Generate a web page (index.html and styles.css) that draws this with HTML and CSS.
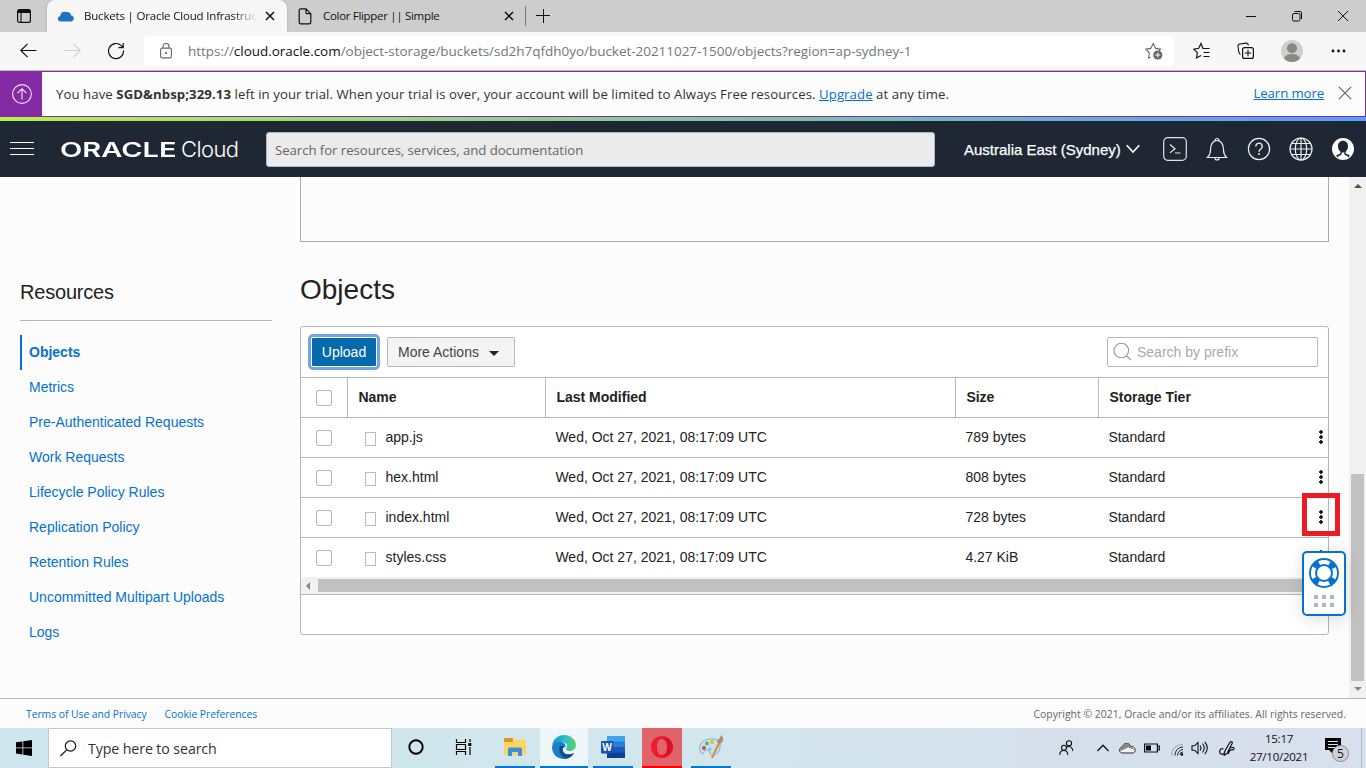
FILE: index.html
```html
<!DOCTYPE html>
<html lang="en">
<head>
<meta charset="utf-8">
<title>Buckets | Oracle Cloud Infrastructure</title>
<link rel="stylesheet" href="styles.css">
</head>
<body>
<div class="screen">
  <div class="tabs">
    <svg class="tab-menu" width="16" height="16" viewBox="0 0 16 16"><rect x="1.6" y="1.6" width="12.8" height="12.8" rx="2" fill="none" stroke="#111" stroke-width="1.2"/><path d="M1.5 3.4a2 2 0 0 1 2-2h9a2 2 0 0 1 2 2v1.6h-13z" fill="#111"/><path d="M5 5v9" stroke="#111" stroke-width="1.1"/></svg>
    <div class="tab active">
      <svg width="18" height="12" viewBox="0 0 18 12"><path d="M4 11.5C0 11.5 0 6.500 3.300 6C3.500 2.500 6.500 1 9 2.300C12 1.500 14 3.300 14 5.600C18 6 17.500 11.500 14 11.500z" fill="#2173bd"/></svg>
      <span class="tab-title fade">Buckets | Oracle Cloud Infrastruc</span>
      <svg class="tab-close" width="10" height="10" viewBox="0 0 10 10"><path d="M1 1l8 8M9 1l-8 8" stroke="#111" stroke-width="1.5"/></svg>
    </div>
    <div class="tab second">
      <svg width="14" height="17" viewBox="0 0 14 17"><path d="M8 .8H2.800A1.600 1.600 0 0 0 1.200 2.400v11.800a1.600 1.600 0 0 0 1.600 1.600h8.400a1.600 1.600 0 0 0 1.600-1.600V5.700zV4.700a1 1 0 0 0 1 1h3.800" fill="none" stroke="#111" stroke-width="1.200"/></svg>
      <span class="tab-title">Color Flipper || Simple</span>
      <svg class="tab-close" width="10" height="10" viewBox="0 0 10 10"><path d="M1 1l8 8M9 1l-8 8" stroke="#111" stroke-width="1.5"/></svg>
    </div>
    <i class="tab-rule"></i>
    <svg class="tab-add" width="14" height="14" viewBox="0 0 14 14"><path d="M7.500 0v14M0 6.500h14" stroke="#111"/></svg>
    <div class="window-buttons">
      <svg width="10" height="12" viewBox="0 0 10 12"><path d="M0 6.500h10" stroke="#111"/></svg>
      <svg width="10" height="12" viewBox="0 0 10 12"><rect x=".5" y="3.500" width="7.500" height="7.500" rx="1.500" fill="none" stroke="#111"/><path d="M2.500 1.500H8a1.500 1.500 0 0 1 1.500 1.500v6" fill="none" stroke="#111"/></svg>
      <svg width="10" height="12" viewBox="0 0 10 12"><path d="M0 1l10 10M10 1L0 11" stroke="#111"/></svg>
    </div>
  </div>

  <div class="browser-bar">
    <svg class="nav-back" width="17" height="16" viewBox="0 0 17 16"><path d="M16.500 7.500H1M7.500.8L.8 7.500l6.700 6.700" fill="none" stroke="#111" stroke-width="1.200"/></svg>
    <svg class="nav-forward" width="17" height="16" viewBox="0 0 17 16"><path d="M0 7.500h16M9.500.8l6.700 6.700-6.700 6.700" fill="none" stroke="#d0d0d0" stroke-width="1.200"/></svg>
    <svg class="nav-reload" width="18" height="18" viewBox="0 0 18 18"><path d="M16.500 8.500a7.500 7.500 0 1 1-2.300-4.900L16 5.400M16.200 1v4.700h-4.700" fill="none" stroke="#111" stroke-width="1.200"/></svg>
    <div class="address">
      <svg width="12" height="16" viewBox="0 0 12 16"><rect x=".6" y="5.100" width="10.800" height="9.800" rx="1.500" fill="none" stroke="#666" stroke-width="1.100"/><path d="M3 5V3.500a3 3 0 0 1 6 0V5" fill="none" stroke="#666" stroke-width="1.100"/><circle cx="6" cy="10" r="1" fill="#555"/></svg>
      <span class="url">https://<b>cloud.oracle.com</b>/object-storage/buckets/sd2h7qfdh0yo/bucket-20211027-1500/objects?region=ap-sydney-1</span>
      <svg class="star" width="18" height="18" viewBox="0 0 18 18"><path d="M5.500 15.200L3.600 16l.7-5.200L.9 7.200l4.800-.8L8.200 1.500l2.400 4.900 4.900.8-1.500 1.600" fill="none" stroke="#666" stroke-width="1.100"/><circle cx="12.800" cy="13" r="4.600" fill="#666"/><path d="M12.800 10.500v5M10.300 13h5" stroke="#fff"/></svg>
    </div>
    <svg class="favorites" width="18" height="18" viewBox="0 0 18 18"><path d="M16.500 6.500H10L8 1.500 5.700 6.300l-5 .8 3.700 3.600-.9 5.200L8 13.500M10.500 10.500h6M10.500 14.500h6" fill="none" stroke="#111" stroke-width="1.150"/></svg>
    <svg class="collections" width="18" height="18" viewBox="0 0 18 18"><rect x="5.600" y="5.600" width="10.800" height="10.800" rx="2" fill="none" stroke="#111" stroke-width="1.200"/><path d="M11 7.800v6.400M7.800 11h6.400M3.500 12.500C2 12 2 10.500 1.700 9L1 4.500C.8 3 1.500 2.200 3 2l6-.9c1.500-.2 2.200.6 2.500 2.200" fill="none" stroke="#111" stroke-width="1.100"/></svg>
    <svg class="avatar" width="22" height="22" viewBox="0 0 22 22"><defs><clipPath id="profile"><circle cx="11" cy="11" r="11"/></clipPath></defs><g clip-path="url(#profile)"><path fill="#d1cfcc" d="M0 0h22v22H0z"/><circle cx="11" cy="8.300" r="5" fill="#8b8783"/><ellipse cx="11" cy="19" rx="8" ry="5" fill="#8b8783"/></g></svg>
    <svg class="more" width="15" height="4" viewBox="0 0 15 4"><g fill="#111"><circle cx="2" cy="2" r="1.400"/><circle cx="7.500" cy="2" r="1.400"/><circle cx="13" cy="2" r="1.400"/></g></svg>
  </div>

  <div class="trial">
    <div class="trial-icon"><svg width="20" height="20" viewBox="0 0 20 20"><g fill="none" stroke="#f2e6f5" stroke-width="1.100"><circle cx="10" cy="10" r="9.400"/><path d="M10 15.500V5M5.500 9.200L10 4.800l4.500 4.400"/></g></svg></div>
    <span class="trial-text">You have <b>SGD&amp;nbsp;329.13</b> left in your trial. When your trial is over, your account will be limited to Always Free resources. <a>Upgrade</a> at any time.</span>
    <a class="learn">Learn more</a>
    <svg class="dismiss" width="14" height="14" viewBox="0 0 14 14"><path d="M.8.800l12.400 12.400M13.200.800L.8 13.200" stroke="#666" stroke-width="1.200"/></svg>
  </div>
  <div class="rainbow"></div>

  <header class="cloud-header">
    <svg class="menu" width="24" height="14" viewBox="0 0 24 14"><path d="M0 .5h24M0 6.500h24M0 12.500h24" stroke="#fff"/></svg>
    <div class="logo"><span class="oracle">ORACLE</span><span class="cloud">Cloud</span></div>
    <div class="global-search">Search for resources, services, and documentation</div>
    <div class="region">Australia East (Sydney)<svg width="14" height="10" viewBox="0 0 14 10"><path d="M.7 1.300L7 8l6.300-6.700" fill="none" stroke="#fff" stroke-width="1.600"/></svg></div>
    <div class="header-icons">
      <svg width="24" height="24" viewBox="0 0 24 24"><rect x=".7" y=".7" width="22.600" height="22.600" rx="4" fill="none" stroke="#dfe2e6" stroke-width="1.200"/><path d="M7 7.500l5 4.200-5 4.200M12 16h5.500" fill="none" stroke="#eee" stroke-width="1.200"/></svg>
      <svg width="24" height="24" viewBox="0 0 24 24"><path d="M2.500 20.500h19c-2-2-3-4-3-7.500 0-5-2-9.500-6.500-9.500S5.500 8 5.500 13c0 3.500-1 5.500-3 7.500zM10 3.500a2 2 0 0 1 4 0M9.800 20.700a2.200 2.200 0 0 0 4.400 0" fill="none" stroke="#eee" stroke-width="1.200"/></svg>
      <svg width="24" height="24" viewBox="0 0 24 24"><circle cx="12" cy="12" r="10.600" fill="none" stroke="#eee" stroke-width="1.200"/><path d="M8.800 9.500a3.200 3.200 0 1 1 5 2.500c-1.200.8-1.800 1.200-1.800 2.800" fill="none" stroke="#eee" stroke-width="1.400"/><circle cx="12" cy="17" r="1" fill="#eee"/></svg>
      <svg width="24" height="24" viewBox="0 0 24 24"><g fill="none" stroke="#eee" stroke-width="1.200"><circle cx="12" cy="12" r="11"/><ellipse cx="12" cy="12" rx="5.700" ry="11"/><path d="M12 1v22M1 12h22M3 6.500h18M3 17.500h18"/></g></svg>
      <svg width="24" height="24" viewBox="0 0 24 24"><circle cx="12" cy="12" r="11" fill="#fff"/><path d="M12 3.800c3 0 5 2.300 5 5.400 0 2.300-.9 4.200-2.300 5.200v2l4.300 2.200-1.700 1.900L12 19l-5.300 1.500L5 18.600l4.300-2.200v-2C7.900 13.400 7 11.500 7 9.200c0-3.100 2-5.400 5-5.400z" fill="#1e2733"/><path d="M10.700 15.300q1.300.5 2.600 0v2.200l4 2.200-5.300 2-5.300-2 4-2.200z" fill="#fff"/></svg>
    </div>
  </header>

  <div class="content">
    <aside class="sidebar">
      <h2>Resources</h2>
      <nav>
        <a class="current">Objects</a><a>Metrics</a><a>Pre-Authenticated Requests</a><a>Work Requests</a><a>Lifecycle Policy Rules</a><a>Replication Policy</a><a>Retention Rules</a><a>Uncommitted Multipart Uploads</a><a>Logs</a>
      </nav>
    </aside>
    <main>
      <div class="details-box"></div>
      <h1>Objects</h1>
      <section class="panel">
        <div class="toolbar">
          <button class="upload">Upload</button>
          <button class="actions">More Actions <i></i></button>
          <div class="prefix"><svg width="20" height="20" viewBox="0 0 20 20"><circle cx="8.300" cy="8.500" r="7.300" fill="none" stroke="#999" stroke-width="1.100"/><path d="M13.500 14l4.500 4" stroke="#999" stroke-width="1.200"/></svg>Search by prefix</div>
        </div>
        <div class="row head"><span class="check"><i></i></span><span>Name</span><span>Last Modified</span><span>Size</span><span>Storage Tier</span></div>
        <div class="row"><span class="check"><i></i></span><span class="file"><i></i>app.js</span><span>Wed, Oct 27, 2021, 08:17:09 UTC</span><span>789 bytes</span><span>Standard<em class="dots"></em></span></div>
        <div class="row"><span class="check"><i></i></span><span class="file"><i></i>hex.html</span><span>Wed, Oct 27, 2021, 08:17:09 UTC</span><span>808 bytes</span><span>Standard<em class="dots"></em></span></div>
        <div class="row"><span class="check"><i></i></span><span class="file"><i></i>index.html</span><span>Wed, Oct 27, 2021, 08:17:09 UTC</span><span>728 bytes</span><span>Standard<em class="dots"></em></span></div>
        <div class="row"><span class="check"><i></i></span><span class="file"><i></i>styles.css</span><span>Wed, Oct 27, 2021, 08:17:09 UTC</span><span>4.27 KiB</span><span>Standard<em class="dots"></em></span></div>
        <div class="hscroll"><i></i><b></b></div>
      </section>
    </main>
    <div class="vscroll"><i class="up"></i><b></b><i class="down"></i></div>
    <div class="highlight"></div>
    <div class="help">
      <svg width="30" height="30" viewBox="0 0 30 30"><g fill="none" stroke="#0572ce"><circle cx="15" cy="15" r="11.200" stroke-width="7" stroke-dasharray="6.500 11.093" stroke-dashoffset="-5.550"/><circle cx="15" cy="15" r="14" stroke-width="1.900"/><circle cx="15" cy="15" r="8" stroke-width="2"/></g></svg>
      <svg width="20" height="12" viewBox="0 0 20 12"><path d="M0 0h4v4H0zM8 0h4v4H8zM16 0h4v4h-4zM0 8h4v4H0zM8 8h4v4H8zM16 8h4v4h-4z" fill="#b0b7c0"/></svg>
    </div>
  </div>

  <footer><a>Terms of Use and Privacy</a><a>Cookie Preferences</a><span>Copyright © 2021, Oracle and/or its affiliates. All rights reserved.</span></footer>

  <div class="taskbar">
    <div class="start"><svg width="16" height="16" viewBox="0 0 16 16"><path d="M0 2.300L6.500 1.400v6.100H0zM7.300 1.200L16 0v7.500H7.300zM0 8.300h6.500v6.200L0 13.600zM7.300 8.300H16V16l-8.700-1.300z"/></svg></div>
    <div class="task-search"><svg width="17" height="17" viewBox="0 0 17 17"><circle cx="10.500" cy="6" r="5.200" fill="none" stroke="#111" stroke-width="1.200"/><path d="M6.700 9.800L.5 16" stroke="#111" stroke-width="1.200"/></svg>Type here to search</div>
    <div class="task plain cortana"><svg width="16" height="16" viewBox="0 0 16 16"><circle cx="8" cy="8" r="6.700" fill="none" stroke="#000" stroke-width="1.900"/></svg></div>
    <div class="task plain view"><svg width="17" height="16" viewBox="0 0 17 16"><path d="M1.500 0v3.500h9V0M1.500 16v-3.500h9V16M1.500 5.500h9v5h-9zM15 0v3M15 8v8" fill="none" stroke="#000" stroke-width="1.200"/><path d="M13.300 4h3v3h-3z"/></svg></div>
    <div class="task explorer"><svg width="22" height="20" viewBox="0 0 22 20"><path d="M0 2q0-1 1-1h8v4H0z" fill="#d99b13"/><path d="M0 5h8l2-2.500h11q1 0 1 1V18H0z" fill="#fbd463"/><path d="M4 19v-7q0-1.500 1.500-1.500h11q1.500 0 1.500 1.500v7h-4v-4H8v4z" fill="#3b91d5"/></svg></div>
    <div class="task edge"><svg width="24" height="24" viewBox="0 0 24 24"><defs><linearGradient id="edgeTop"><stop stop-color="#178fd2"/><stop offset=".55" stop-color="#29bfd1"/><stop offset="1" stop-color="#62d35b"/></linearGradient></defs><path d="M0 11C1 4 6 0 12 0c7 0 12 5 12 10 0 4-3 6-6.500 6-3 0-4-1.500-3-3 2-3-1-6-5-6C5 7 1 9 0 11z" fill="url(#edgeTop)"/><path d="M0 12c1-4 5-6 9-5 4 .5 5 3 4.500 5-2 0-3 2-2.500 4 1 4 6 5 11 2-2 4-6 6-10 6C5 24 0 19 0 12z" fill="#187ec5"/><path d="M8 11c-2 5 1 10 5 12.500 4 0 7-2 9-5.500-4 2-9 2-11-1.500C10 14.500 10.500 12.500 12 11z" fill="#124a8c"/></svg></div>
    <div class="task word"><svg width="24" height="22" viewBox="0 0 24 22"><rect x="6" y="0" width="18" height="22" rx="1" fill="#2b7cd3"/><path fill="#41a5ee" d="M6 0h18v5.500H6z"/><path fill="#185abd" d="M6 11h18v5.500H6z"/><path fill="#103f91" d="M6 16.500h18V22H6z"/><rect y="5" width="12.500" height="12.500" rx="1" fill="#1854b4"/><text x="6.200" y="14.700" text-anchor="middle" class="word-letter">W</text></svg></div>
    <div class="task opera"><svg width="24" height="24" viewBox="0 0 24 24"><path fill-rule="evenodd" d="M12 1c7 0 11 5 11 11s-4 11-11 11S1 18 1 12 5 1 12 1zm0 3C8 4 7 8 7 12s1 8 5 8 5-4 5-8-1-8-5-8z" fill="#ef1b2d"/><path d="M12 4c3-3 11 1 11 8s-8 11-11 8c4 0 5-4 5-8s-1-8-5-8z" fill="#b80c20" opacity=".45"/></svg></div>
    <div class="task paint"><svg width="25" height="24" viewBox="0 0 25 24"><path d="M2 18C-2 10 4 4 12 4c8-.5 11 5 8 12-3 6-9 5-9 2 0-3-5-4-6-1-.5 2-2 2-3 1z" fill="#c5e5f4" stroke="#69a2be" stroke-width=".8"/><circle cx="5" cy="13" r="2" fill="#df4444"/><circle cx="8" cy="8.500" r="2" fill="#61b34b"/><circle cx="13" cy="7" r="2" fill="#f2bd24"/><circle cx="11" cy="14" r="1.600" fill="#7fc4df"/><path d="M20 8l-7 15" stroke="#e58d35" stroke-width="2.200"/><path d="M18 7c0-3 3-2 4-7 3 2 3 7-1 9z" fill="#b58a66"/></svg></div>
    <div class="tray">
      <svg class="people" width="15" height="16" viewBox="0 0 15 16"><g fill="none" stroke="#111" stroke-width="1.100"><circle cx="5" cy="7.800" r="2.500"/><path d="M.8 15c0-6 8-6 8 0"/><circle cx="10" cy="3.300" r="2.600"/><path d="M7.800 7c3-1.500 6 .5 6 4"/></g></svg>
      <svg class="chevron" width="12" height="8" viewBox="0 0 12 8"><path d="M.5 7L6 1.300 11.500 7" fill="none" stroke="#111" stroke-width="1.300"/></svg>
      <svg class="drive" width="17" height="12" viewBox="0 0 17 12"><path d="M4 11C-.5 11-.5 6 3 5.200 4 .8 10-.2 12.200 4.500 17 4 17.500 11 13.500 11z" fill="#f4f4f4" stroke="#222"/><path d="M3 5.200C4 .8 10-.2 12.200 4.500L16 8 9 5.500 1.500 9Q0 6 3 5.200z" fill="#888"/></svg>
      <svg class="battery" width="16" height="10" viewBox="0 0 16 10"><path d="M.6 1h12.800v8H.6zM14 3h1.300v4H14" fill="none" stroke="#111" stroke-width="1.200"/><path d="M2 2.500h5v5H2z"/></svg>
      <svg class="wifi" width="13" height="12" viewBox="0 0 13 12"><g fill="none" stroke="#222"><path d="M9 11a3 3 0 0 1 3-3M6.500 11.500A6 6 0 0 1 12 5.500M4 11.500a8 8 0 0 1 8-8.500"/><path d="M1 11.500C0 5 6 0 12 .8" stroke="#999"/></g><circle cx="11" cy="10.500" r="1.200"/></svg>
      <svg class="sound" width="17" height="14" viewBox="0 0 17 14"><path d="M1 4.800h2.500L7 1.500v11L3.500 9.200H1zM9 4.500q2 2.500 0 5M11.500 2.500q3.500 4.500 0 9M13.800.800q5 6.200 0 12.400" fill="none" stroke="#111" stroke-width="1.100"/></svg>
      <svg class="pen" width="17" height="16" viewBox="0 0 17 16"><path d="M4.500 9C1 7.500-.5 12 1.700 13.800c2.500 1.500 4-1 4.300-3L11 2.200c.8-1.300 2.800-.4 2.200 1L8 13.500l-2.800 1.700.3-3.500M9.500 14c0-3 2-5 5.500-4.200M11 8c2-1.500 4-.5 4.500 1" fill="none" stroke="#111" stroke-width="1.200"/></svg>
      <div class="clock"><span>15:17</span><span>27/10/2021</span></div>
      <div class="notice"><svg width="24" height="24" viewBox="0 0 24 24"><path d="M0 0h16v12H8v4l-4-4H0z" fill="#000"/><path d="M3 3.500h10M3 6.500h10M3 9.500h7" stroke="#dce2ed"/><circle cx="15.500" cy="15.500" r="8" fill="#cfd2d7" stroke="#888"/><text x="15.500" y="19.800" text-anchor="middle" class="notice-count">5</text></svg></div>
      <i class="desktop-edge"></i>
    </div>
  </div>
</div>
</body>
</html>
```
FILE: styles.css
```css
* { box-sizing: border-box; }
body { margin: 0; background: #fcfcfc; font: 14px "Liberation Sans", sans-serif; color: #222; }
svg { display: block; flex: none; }
.screen { width: 1366px; height: 768px; overflow: hidden; display: flex; flex-direction: column; }
.tabs, .browser-bar, .trial, .cloud-header, footer, .taskbar, .tray { display: flex; align-items: center; flex: none; white-space: nowrap; }
.tabs, .browser-bar, .trial, .global-search, footer, .taskbar { font-family: "Open Sans", sans-serif; }

.tabs { height: 32px; background: #cdcdcd; padding-left: 16px; }
.tab-menu { margin-right: 15px; }
.tab { height: 32px; display: flex; align-items: center; color: #111; font-size: 12px; }
.tab.active { width: 240px; background: #f7f7f7; border-radius: 8px 8px 0 0; padding-left: 10px; box-shadow: 0 0 2px #999; clip-path: inset(0 -2px 0 -2px); }
.tab-title { margin-left: 9px; font-size: 11.5px; letter-spacing: -.18px; line-height: 16px; padding-bottom: 1px; }
.fade { width: 174px; overflow: hidden; -webkit-mask-image: linear-gradient(90deg, #000 85%, transparent); mask-image: linear-gradient(90deg, #000 85%, transparent); }
.active .tab-close { margin-left: 7px; }
.second { width: 239px; padding-left: 11px; }
.second .tab-title { width: 172px; margin-left: 11px; letter-spacing: -.31px; }
.second .tab-close { margin-left: 9px; }
.tab-rule { width: 1px; height: 20px; background: #777; margin-left: -1px; }
.tab-add { margin-left: 10px; }
.window-buttons { display: flex; gap: 36px; margin-left: auto; padding-right: 18px; }

.browser-bar { height: 39px; background: #f7f7f7; border-bottom: 1px solid #bbb; padding-left: 20px; }
.nav-forward { margin-left: 27px; }
.nav-reload { margin: 0 19px 0 26px; }
.address { width: 1030px; height: 30px; background: #fff; border-radius: 4px; padding: 0 11px 0 16px; display: flex; align-items: center; }
.nav-reload { margin-right: 19px; }
.url { margin-left: 16px; color: #767676; font-size: 13.500px; letter-spacing: -.03px; }
.url b { font-weight: 400; color: #111; }
.star { margin-left: auto; }
.favorites { margin-left: 19px; }
.collections { margin-left: 26px; }
.avatar { margin-left: 26px; }
.more { margin-left: 28px; }

.trial { height: 46px; border: 1px solid #832aa4; background: #fcfcfc; color: #333; }
.trial-icon { width: 41px; height: 44px; background: #832aa4; display: grid; place-items: center; }
.trial-text { margin-left: 14px; font-size: 13.200px; letter-spacing: .073px; }
.trial a { color: #0572ce; text-decoration: underline; }
.learn { margin: 0 0 2px auto; font-size: 13.200px; letter-spacing: -.1px; }
.dismiss { margin: 0 13px 2px 14px; }
.rainbow { height: 4px; flex: none; background: linear-gradient(90deg, #b5f04c, #74bdb8 65%, #559dff); }

.cloud-header { height: 56px; background: #1e2733; color: #fff; padding: 0 11px 0 10px; }
.logo { width: 180px; height: 30px; margin-left: 26px; display: flex; align-items: center; }
.oracle { width: 121px; padding-top: 1px; font: 600 20px/30px "Inter", sans-serif; transform: scaleX(1.450); transform-origin: left; }
.cloud { font: 300 22px/30px "Inter", sans-serif; letter-spacing: -.6px; }
.global-search { width: 669px; height: 35px; margin-left: 26px; padding-left: 8px; border: 1px solid #b0b7c0; border-radius: 3px; background: #ebebeb; color: #666; font-size: 13.200px; letter-spacing: -.05px; line-height: 34px; }
.region { margin-left: 29px; font-size: 15px; display: flex; align-items: center; gap: 5px; -webkit-text-stroke: .25px #fff; }
.header-icons { display: flex; gap: 18px; margin-left: auto; }

.content { flex: 1; min-height: 0; display: flex; position: relative; background: #fcfcfc; }
.sidebar { width: 252px; margin: 0 28px 0 20px; }
.sidebar h2 { height: 144px; margin: 0; padding-top: 103px; border-bottom: 1px solid #b0b7c0; font-size: 20px; font-weight: 400; line-height: 24px; letter-spacing: -.2px; }
.sidebar nav { padding-top: 14px; }
.sidebar a { display: block; height: 35px; line-height: 34px; padding-left: 9px; color: #0572ce; }
.sidebar .current { border-left: 2px solid #0572ce; padding-left: 7px; font-weight: 700; }
main { width: 1029px; }
.details-box { height: 65px; border: 1px solid #aaa; border-top: 0; }
h1 { margin: 32px 0 20px; font-size: 28px; line-height: 32px; font-weight: 400; }
.panel { height: 309px; border: 1px solid #b0b7c0; border-radius: 3px; background: #fff; }
.toolbar { height: 50px; display: flex; align-items: center; padding: 0 10px; }
.toolbar button { height: 30px; font: 14px "Liberation Sans", sans-serif; border-radius: 2px; padding: 0; }
.upload { width: 66px; border: 1px solid #fff; background: #046aac; color: #fff; outline: 3px solid #71a5e1; }
.toolbar .actions { width: 128px; margin-left: 10px; padding-left: 10px; border: 1px solid #b0b7c0; background: #f4f4f4; color: #444; display: flex; align-items: center; }
.actions i { margin-left: 10px; border: 5px solid transparent; border-top-color: #222; border-bottom: 0; margin-top: 3px; }
.prefix { width: 211px; height: 30px; margin-left: auto; padding-left: 5px; border: 1px solid #b0b7c0; border-radius: 2px; display: flex; align-items: center; gap: 4px; color: #aaa; }
.row { height: 40px; border-top: 1px solid #b0b7c0; display: grid; grid-template-columns: 46px 198px 410px 143px 1fr; line-height: 38px; color: #222; }
.row > span { padding-left: 10.400px; position: relative; }
.row > .check { padding: 12px 0 0 15px; border: 0; }
.check i { display: block; width: 16px; height: 16px; border: 1px solid #b0b7c0; border-radius: 2px; background: #fff; }
.head > span { border-left: 1px solid #b0b7c0; font-weight: 700; }
.row .file { display: flex; align-items: flex-start; padding-left: 18px; }
.file i { width: 11px; height: 14px; border: 1px solid #bbb; margin: 14px 9.500px 0 0; }
.dots { position: absolute; right: 5px; top: 12px; width: 4px; height: 14px; background: radial-gradient(circle at 2px 2px, #111 1.500px, transparent 1.900px) 0 0 / 4px 5px; }
.hscroll { height: 18px; display: flex; align-items: center; gap: 6px; padding-left: 5px; background: #f1f1f1; border-bottom: 1px solid #b0b7c0; }
.hscroll i { border: 4px solid transparent; border-right-color: #888; border-left: 0; width: 0; }
.hscroll b { flex: 1; height: 13px; margin-left: 2px; background: #c1c1c1; }
.vscroll { width: 17px; margin-left: 20px; padding: 7px 2px; display: flex; flex-direction: column; align-items: center; background: #f1f1f1; }
.vscroll i { border: 4px solid transparent; }
.vscroll .up { border-top: 0; border-bottom-color: #505050; }
.vscroll .down { border-bottom: 0; border-top-color: #888; margin-top: 6px; }
.vscroll b { width: 13px; height: 207px; margin-top: 286px; background: #c1c1c1; }
.highlight { position: absolute; left: 1302px; top: 316px; width: 38px; height: 43px; border: 5px solid #ed1c24; }
.help { position: absolute; left: 1302px; top: 374px; width: 44px; height: 65px; border: 2px solid #0572ce; border-radius: 5px; background: #fff; display: flex; flex-direction: column; align-items: center; gap: 7px; padding-top: 5px; box-shadow: 0 3px 16px #0002; }

footer { height: 30px; border-top: 1px solid #b0b7c0; padding: 1px 20px 0 26px; gap: 18px; font-size: 10.400px; letter-spacing: -.04px; }
footer a { color: #0572ce; letter-spacing: -.06px; }
footer span { margin-left: auto; color: #666; letter-spacing: .035px; }

.taskbar { height: 40px; background: linear-gradient(90deg, #cde6ed, #d3e6ed 55%, #d5dfeb 78%, #d8dfed); }
.start { width: 48px; display: grid; place-items: center; }
.task-search { width: 344px; height: 40px; border: 1px solid #c4c8ca; background: #fff; display: flex; align-items: center; padding-left: 11px; gap: 11px; color: #333; font-size: 14.200px; letter-spacing: -.1px; }
.task { width: 40px; height: 40px; display: grid; place-items: center; border-bottom: 2px solid #0078d7; margin-right: 9px; }
.plain { border-bottom-color: transparent; margin: 0; }
.cortana { width: 48px; }
.view { width: 48px; margin-right: 7px; padding-right: 2px; }
.explorer { margin-right: 5px; }
.edge { width: 48px; margin-right: 5px; background: #eff6f9; }
.opera { background: #e1646b; border-color: #f00; }
.word-letter { fill: #fff; font: 700 10px "Open Sans", sans-serif; }
.tray { flex: 1; height: 40px; }
.people { margin-left: 319px; }
.chevron { margin-left: 23px; }
.drive { margin-left: 10px; }
.battery { margin-left: 8px; }
.wifi { margin: 4px 0 0 11px; }
.sound { margin-left: 7px; }
.pen { margin-left: 11px; }
.clock { width: 60px; margin-left: 13px; display: flex; flex-direction: column; align-items: center; font-size: 11.500px; line-height: 18px; letter-spacing: -.25px; color: #111; }
.notice { margin: 3px 0 0 16px; }
.notice-count { fill: #111; font: 12px "Open Sans", sans-serif; }
.desktop-edge { width: 1px; height: 40px; margin-left: auto; margin-right: 4px; background: #b1b8c1; }
```
